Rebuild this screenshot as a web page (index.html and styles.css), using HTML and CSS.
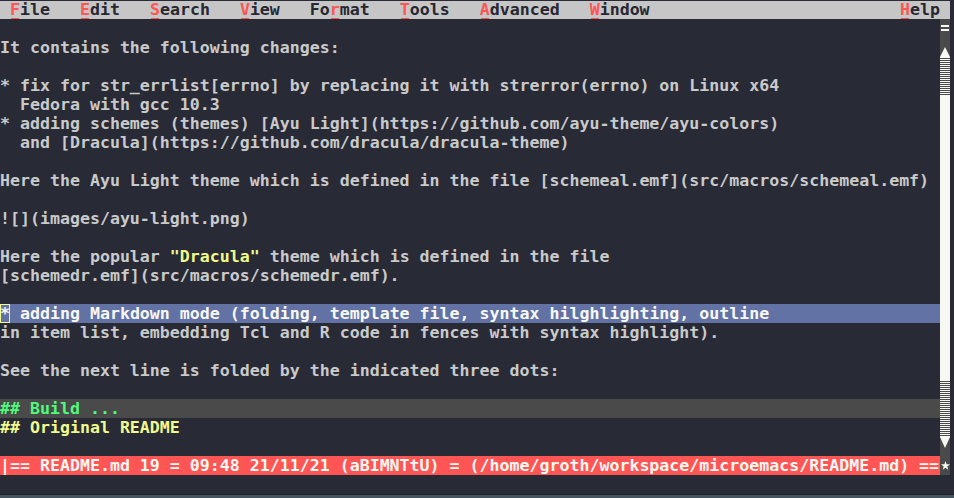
FILE: index.html
```html
<!DOCTYPE html>
<html>
<head>
<meta charset="utf-8">
<link rel="stylesheet" href="styles.css">
</head>
<body>
<div class="screen">
  <div class="menubar">
    <span class="menu-item"> <span class="key">F</span>ile</span><span class="menu-item">   <span class="key">E</span>dit</span><span class="menu-item">   <span class="key">S</span>earch</span><span class="menu-item">   <span class="key">V</span>iew</span><span class="menu-item">   Fo<span class="key">r</span>mat</span><span class="menu-item">   <span class="key">T</span>ools</span><span class="menu-item">   <span class="key">A</span>dvanced</span><span class="menu-item">   <span class="key">W</span>indow</span><span class="menu-spacer"></span><span class="menu-item"><span class="key">H</span>elp</span>
  </div>
  <div class="main">
    <div class="text">
      <div class="line"></div>
      <div class="line">It contains the following changes:</div>
      <div class="line"></div>
      <div class="line">* fix for str_errlist[errno] by replacing it with strerror(errno) on Linux x64</div>
      <div class="line">  Fedora with gcc 10.3</div>
      <div class="line">* adding schemes (themes) [Ayu Light](https://github.com/ayu-theme/ayu-colors)</div>
      <div class="line">  and [Dracula](https://github.com/dracula/dracula-theme)</div>
      <div class="line"></div>
      <div class="line">Here the Ayu Light theme which is defined in the file [schemeal.emf](src/macros/schemeal.emf)</div>
      <div class="line"></div>
      <div class="line">![](images/ayu-light.png)</div>
      <div class="line"></div>
      <div class="line">Here the popular <span class="yellow">"Dracula"</span> theme which is defined in the file</div>
      <div class="line">[schemedr.emf](src/macros/schemedr.emf).</div>
      <div class="line"></div>
      <div class="line selected"><span class="cursor">*</span> adding Markdown mode (folding, template file, syntax hilghlighting, outline</div>
      <div class="line">in item list, embedding Tcl and R code in fences with syntax highlight).</div>
      <div class="line"></div>
      <div class="line">See the next line is folded by the indicated three dots:</div>
      <div class="line"></div>
      <div class="line folded"><span class="green">## Build ...</span></div>
      <div class="line"><span class="yellow">## Original README</span></div>
      <div class="line"></div>
    </div>
    <div class="scrollbar">
      <div class="sb-cell sb-menu"><div class="sb-equals"></div></div>
      <div class="sb-cell sb-up"><div class="tri-up"></div></div>
      <div class="sb-stripes sb-top"></div>
      <div class="sb-thumb"></div>
      <div class="sb-stripes sb-bottom"></div>
      <div class="sb-cell sb-down"><div class="tri-down"></div></div>
    </div>
  </div>
  <div class="statusrow">
    <div class="status">|== README.md 19 = 09:48 21/11/21 (aBIMNTtU) = (/home/groth/workspace/microemacs/README.md) ==</div>
    <div class="status-star"><svg width="9" height="9" viewBox="0 0 10 10"><polygon points="5,0 6.2,3.6 10,3.7 7,6 8.1,9.8 5,7.6 1.9,9.8 3,6 0,3.7 3.8,3.6" fill="#f8f8f2"/></svg></div>
  </div>
  <div class="line"></div>
</div>
<div class="bottomline"></div>
</body>
</html>
```
FILE: styles.css
```css
html, body {
  margin: 0;
  padding: 0;
}
body {
  background: #282a36;
  width: 954px;
  height: 498px;
  overflow: hidden;
  display: flex;
  flex-direction: column;
  font-family: "DejaVu Sans Mono", "Liberation Mono", monospace;
  font-size: 16.6px;
  font-weight: bold;
  color: #cacaca;
}
.screen {
  width: 950px;
  height: 494px;
  display: flex;
  flex-direction: column;
}
.menubar {
  height: 19px;
  box-sizing: border-box;
  border-top: 1px solid #282a36;
  background: #c6c6c6;
  color: #262731;
  line-height: 18px;
  white-space: pre;
  display: flex;
}
.menu-spacer {
  flex: 1;
}
.menu-item {
  white-space: pre;
}
.menu-item:last-child {
  width: 50px;
}
.key {
  color: #ff5555;
  display: inline-block;
  height: 18px;
  background: linear-gradient(#ff5555, #ff5555) no-repeat center bottom / 8px 1px;
}
.main {
  display: flex;
  height: 437px;
}
.text {
  width: 940px;
  display: flex;
  flex-direction: column;
}
.line {
  height: 19px;
  line-height: 19px;
  white-space: pre;
  overflow: hidden;
}
.selected {
  background: #6272a4;
  color: #f8f8f2;
}
.cursor {
  display: inline-block;
  width: 10px;
  height: 19px;
  box-shadow: inset 0 0 0 1px #f1fa8c;
  vertical-align: top;
}
.folded {
  background: #4a4a4a;
}
.green {
  color: #50fa7b;
}
.yellow {
  color: #f1fa8c;
}
.scrollbar {
  width: 10px;
  background: #4a4a4a;
  display: flex;
  flex-direction: column;
}
.sb-cell {
  height: 19px;
  display: flex;
  justify-content: center;
}
.sb-menu {
  align-items: flex-start;
}
.sb-equals {
  margin-top: 6px;
  width: 8px;
  height: 2px;
  border-top: 2px solid #f8f8f2;
  border-bottom: 2px solid #f8f8f2;
}
.sb-up {
  align-items: flex-end;
}
.tri-up {
  width: 10px;
  height: 10px;
  background: #f8f8f2;
  clip-path: polygon(50% 0, 100% 100%, 0 100%);
}
.sb-down {
  align-items: flex-start;
}
.tri-down {
  width: 10px;
  height: 11px;
  background: #f8f8f2;
  clip-path: polygon(0 0, 100% 0, 50% 100%);
}
.sb-stripes {
  background: repeating-linear-gradient(to bottom, #f8f8f2 0 1px, #4a4a4a 1px 2px);
}
.sb-top {
  height: 38px;
}
.sb-bottom {
  height: 57px;
}
.sb-thumb {
  height: 285px;
  background: #f8f8f2;
}
.statusrow {
  display: flex;
  height: 19px;
}
.status {
  width: 940px;
  background: #ff5555;
  color: #f8f8f2;
  line-height: 19px;
  white-space: pre;
  overflow: hidden;
}
.status-star {
  width: 10px;
  background: #4a4a4a;
  display: flex;
  align-items: center;
  justify-content: center;
}
.bottomline {
  height: 4px;
  border-top: 1px solid #1e1f27;
  box-sizing: border-box;
  background: #46555f;
}
```
